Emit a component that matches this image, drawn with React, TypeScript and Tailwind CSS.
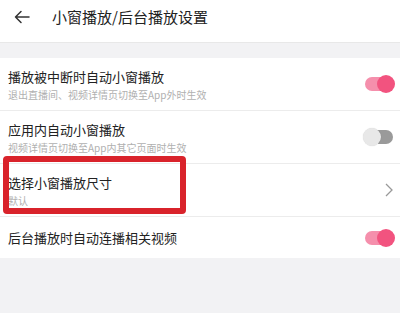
import React from "react";

function Toggle({ on }: { on: boolean }) {
  if (on) {
    return (
      <div className="relative w-[30px] h-[18px] flex items-center">
        <div className="w-[28px] h-[14px] rounded-full bg-[#f58fac]" />
        <div className="absolute right-0 top-[0px] w-[18px] h-[18px] rounded-full bg-[#f2537f]" />
      </div>
    );
  }
  return (
    <div className="relative w-[30px] h-[18px] flex items-center">
      <div className="w-[28px] h-[14px] rounded-full bg-[#9a9a9a]" />
      <div className="absolute left-[-2px] top-[0px] w-[18px] h-[18px] rounded-full bg-[#e8e8e8] shadow-[0_0_1px_rgba(0,0,0,0.2)]" />
    </div>
  );
}

function Row({
  title,
  sub,
  right,
  h,
  children,
  border = true,
}: {
  title: string;
  sub?: string;
  right: React.ReactNode;
  h: string;
  children?: React.ReactNode;
  border?: boolean;
}) {
  return (
    <div className={`relative bg-white ${h} flex items-center pl-[8px] pr-[5px] ${border ? "border-b border-[#ececec]" : ""}`}>
      {children}
      <div className="flex-1 flex flex-col">
        <div className="text-[13px] leading-[18px] text-[#222]">{title}</div>
        {sub && <div className="text-[10px] leading-[13px] text-[#b0b0b0] mt-[2px]">{sub}</div>}
      </div>
      {right}
    </div>
  );
}

export default function App() {
  return (
    <div
      className="w-[400px] h-[313px] bg-[#f2f2f4] overflow-hidden"
      style={{ fontFamily: '"Noto Sans CJK SC", "Noto Sans", sans-serif' }}
    >
      <div className="h-[43px] bg-white flex items-start pt-[9px] border-b border-[#e8e8e8]">
        <svg width="16" height="14" viewBox="0 0 16 14" className="ml-[14px] mt-[1px]" fill="none" stroke="#333" strokeWidth="1.5" strokeLinecap="round" strokeLinejoin="round">
          <path d="M15 7H1.5M7 1.5L1.5 7 7 12.5" />
        </svg>
        <div className="ml-[22px] text-[15px] text-[#222] leading-[16px]">小窗播放/后台播放设置</div>
      </div>
      <div className="h-[15px]" />
      <Row title="播放被中断时自动小窗播放" sub="退出直播间、视频详情页切换至App外时生效" h="h-[53px]" right={<Toggle on />} />
      <Row title="应用内自动小窗播放" sub="视频详情页切换至App内其它页面时生效" h="h-[53px]" right={<Toggle on={false} />} />
      <Row
        title="选择小窗播放尺寸"
        sub="默认"
        h="h-[53px]"
        right={
          <svg width="8" height="14" viewBox="0 0 8 14" fill="none" stroke="#999" strokeWidth="1.3" className="mr-[2px]">
            <path d="M1 1l6 6-6 6" />
          </svg>
        }
      >
        <div className="absolute left-[3px] top-[-8px] w-[183px] h-[58px] border-[6px] border-[#d9232b] rounded-[4px]" />
      </Row>
      <Row title="后台播放时自动连播相关视频" h="h-[41px]" border={false} right={<Toggle on />} />
    </div>
  );
}
